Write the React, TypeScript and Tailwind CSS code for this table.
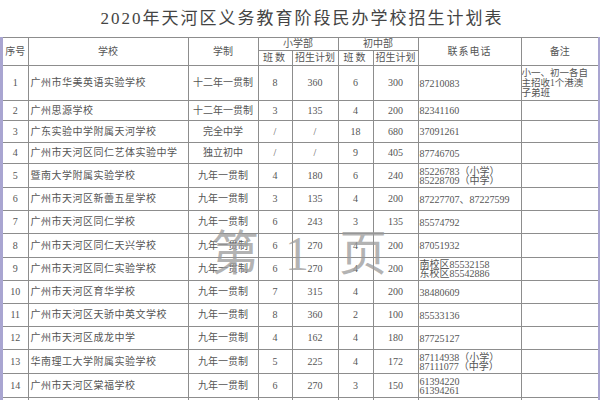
import React from 'react'

type Row = {
  no: string
  school: string
  system: string
  pClass: string
  pPlan: string
  mClass: string
  mPlan: string
  phone: string[]
  note?: string[]
  h: string
}

const rows: Row[] = [
  { no: '1', school: '广州市华美英语实验学校', system: '十二年一贯制', pClass: '8', pPlan: '360', mClass: '6', mPlan: '300', phone: ['87210083'], note: ['小一、初一各自', '主招收1个港澳', '子弟班'], h: 'h-[35px]' },
  { no: '2', school: '广州思源学校', system: '十二年一贯制', pClass: '3', pPlan: '135', mClass: '4', mPlan: '200', phone: ['82341160'], h: 'h-[20px]' },
  { no: '3', school: '广东实验中学附属天河学校', system: '完全中学', pClass: '/', pPlan: '/', mClass: '18', mPlan: '680', phone: ['37091261'], h: 'h-[22px]' },
  { no: '4', school: '广州市天河区同仁艺体实验中学', system: '独立初中', pClass: '/', pPlan: '/', mClass: '9', mPlan: '405', phone: ['87746705'], h: 'h-[21px]' },
  { no: '5', school: '暨南大学附属实验学校', system: '九年一贯制', pClass: '4', pPlan: '180', mClass: '6', mPlan: '240', phone: ['85226783（小学）', '85228709（中学）'], h: 'h-[24px]' },
  { no: '6', school: '广州市天河区新蕾五星学校', system: '九年一贯制', pClass: '3', pPlan: '135', mClass: '4', mPlan: '200', phone: ['87227707、87227599'], h: 'h-[23px]' },
  { no: '7', school: '广州市天河区同仁学校', system: '九年一贯制', pClass: '6', pPlan: '243', mClass: '3', mPlan: '135', phone: ['85574792'], h: 'h-[23px]' },
  { no: '8', school: '广州市天河区同仁天兴学校', system: '九年一贯制', pClass: '6', pPlan: '270', mClass: '4', mPlan: '200', phone: ['87051932'], h: 'h-[24px]' },
  { no: '9', school: '广州市天河区同仁实验学校', system: '九年一贯制', pClass: '6', pPlan: '270', mClass: '4', mPlan: '200', phone: ['南校区85532158', '东校区85542886'], h: 'h-[23px]' },
  { no: '10', school: '广州市天河区育华学校', system: '九年一贯制', pClass: '7', pPlan: '315', mClass: '4', mPlan: '200', phone: ['38480609'], h: 'h-[23px]' },
  { no: '11', school: '广州市天河区天骄中英文学校', system: '九年一贯制', pClass: '8', pPlan: '360', mClass: '2', mPlan: '100', phone: ['85533136'], h: 'h-[23px]' },
  { no: '12', school: '广州市天河区成龙中学', system: '九年一贯制', pClass: '4', pPlan: '162', mClass: '4', mPlan: '180', phone: ['87725127'], h: 'h-[23px]' },
  { no: '13', school: '华南理工大学附属实验学校', system: '九年一贯制', pClass: '5', pPlan: '225', mClass: '4', mPlan: '172', phone: ['87114938（小学）', '87111077（中学）'], h: 'h-[24px]' },
  { no: '14', school: '广州市天河区棠福学校', system: '九年一贯制', pClass: '6', pPlan: '270', mClass: '3', mPlan: '150', phone: ['61394220', '61394261'], h: 'h-[24px]' },
]

const cell = 'border border-[#8d8d8d] p-0 align-middle'

export default function App() {
  return (
    <div
      className="w-[600px] h-[400px] overflow-hidden bg-white relative text-[#555]"
      style={{ fontFamily: '"Liberation Serif", "Noto Sans CJK SC", serif' }}
    >
      {/* Title */}
      <div className="h-[37px] flex items-center justify-center">
        <h1 className="text-[17px] leading-none tracking-[2px] text-[#444] pl-[4px]">
          2020年天河区义务教育阶段民办学校招生计划表
        </h1>
      </div>

      <div className="w-[600px] border-l-[3px] border-r-[2px] border-[#a9a5d1]">
        <table className="table-fixed border-collapse w-[595px] text-[10px] leading-[10px]">
          <colgroup>
            <col className="w-[25px]" />
            <col className="w-[160px]" />
            <col className="w-[70px]" />
            <col className="w-[34px]" />
            <col className="w-[46px]" />
            <col className="w-[35px]" />
            <col className="w-[45px]" />
            <col className="w-[103px]" />
            <col className="w-[77px]" />
          </colgroup>
          <thead>
            <tr className="h-[13px]">
              <th rowSpan={2} className={`${cell} border-l-0 font-normal`}>序号</th>
              <th rowSpan={2} className={`${cell} font-normal`}>学校</th>
              <th rowSpan={2} className={`${cell} font-normal`}>学制</th>
              <th colSpan={2} className={`${cell} font-normal`}>小学部</th>
              <th colSpan={2} className={`${cell} font-normal`}>初中部</th>
              <th rowSpan={2} className={`${cell} font-normal tracking-[1px]`}>联系电话</th>
              <th rowSpan={2} className={`${cell} border-r-0 font-normal`}>备注</th>
            </tr>
            <tr className="h-[15px]">
              <th className={`${cell} font-normal tracking-[2px]`}>班数</th>
              <th className={`${cell} font-normal`}>招生计划</th>
              <th className={`${cell} font-normal tracking-[2px]`}>班数</th>
              <th className={`${cell} font-normal`}>招生计划</th>
            </tr>
          </thead>
          <tbody>
            {rows.map((r) => (
              <tr key={r.no} className={r.h}>
                <td className={`${cell} border-l-0 text-center`}>{r.no}</td>
                <td className={`${cell} pl-[2px] tracking-[0.5px] whitespace-nowrap`}>{r.school}</td>
                <td className={`${cell} text-center`}>{r.system}</td>
                <td className={`${cell} text-center`}>{r.pClass}</td>
                <td className={`${cell} text-center`}>{r.pPlan}</td>
                <td className={`${cell} text-center`}>{r.mClass}</td>
                <td className={`${cell} text-center`}>{r.mPlan}</td>
                <td className={`${cell} pl-[1px] leading-[9px] whitespace-nowrap`}>
                  {r.phone.map((p) => (
                    <div key={p}>{p}</div>
                  ))}
                </td>
                <td className={`${cell} border-r-0 leading-[10px] text-[9.5px] whitespace-nowrap overflow-hidden`}>
                  {r.note?.map((n) => (
                    <div key={n}>{n}</div>
                  ))}
                </td>
              </tr>
            ))}
            <tr className="h-[20px]">
              <td className={`${cell} border-l-0`}></td>
              <td className={cell}></td>
              <td className={cell}></td>
              <td className={cell}></td>
              <td className={cell}></td>
              <td className={cell}></td>
              <td className={cell}></td>
              <td className={cell}></td>
              <td className={`${cell} border-r-0`}></td>
            </tr>
          </tbody>
        </table>
      </div>

      {/* Page watermark */}
      <div className="absolute left-[211px] top-[230px] flex items-end text-[48px] leading-none text-[#9a9a9a]/75 whitespace-nowrap pointer-events-none">
        <span>第</span>
        <span className="ml-[26px]">1</span>
        <span className="ml-[30px]">页</span>
      </div>
    </div>
  )
}
